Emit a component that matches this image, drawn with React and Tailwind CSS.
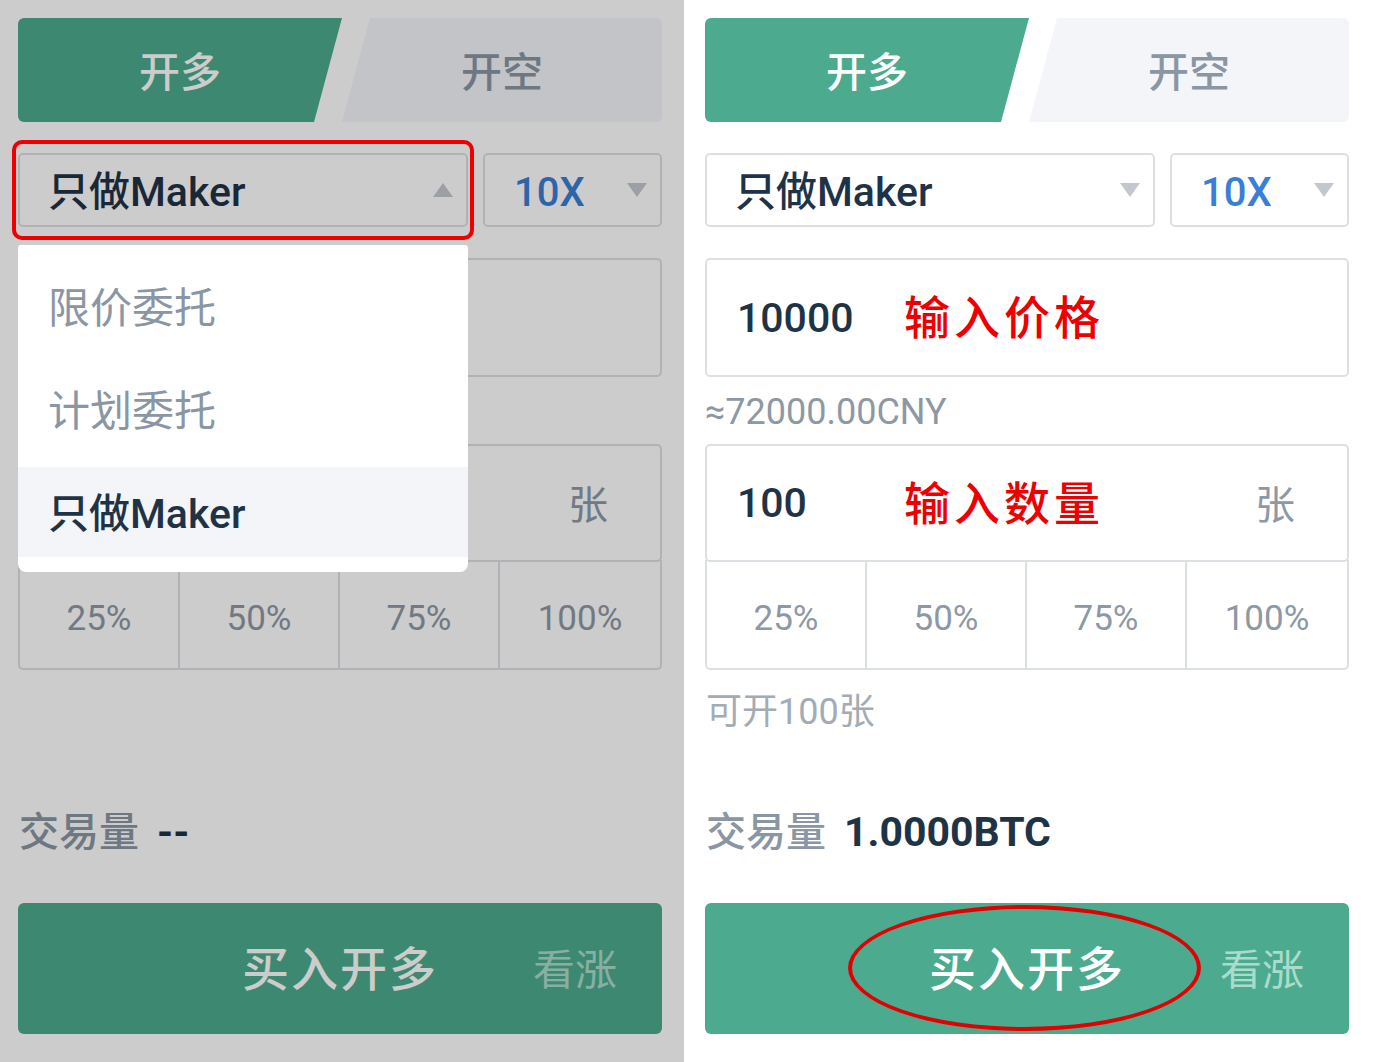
import React from "react";

const FONT = "font-['Roboto','Noto_Sans_CJK_SC',sans-serif]";

function DownArrow() {
  return <div className="w-0 h-0 border-x-[10px] border-x-transparent border-t-[14px] border-t-[#c3c8cf]" />;
}
function UpArrow() {
  return <div className="w-0 h-0 border-x-[10px] border-x-transparent border-b-[14px] border-b-[#c3c8cf]" />;
}

function Tabs() {
  return (
    <div className="flex h-[104px]">
      <div className="w-[324px] h-full bg-[#4caa8e] rounded-l-[6px] [clip-path:polygon(0_0,100%_0,calc(100%-28px)_100%,0_100%)] flex items-center justify-center pt-[7px] text-white text-[41px] font-medium">
        开多
      </div>
      <div className="flex-1 h-full bg-[#f4f5f9] rounded-r-[6px] [clip-path:polygon(28px_0,100%_0,100%_100%,0_100%)] flex items-center justify-center pt-[7px] text-[#8a96a3] text-[41px] font-medium">
        开空
      </div>
    </div>
  );
}

function Panel({ left }) {
  return (
    <div className="flex flex-col">
      <Tabs />
      <div className="flex gap-[15px] mt-[31px] h-[74px]">
        <div className="relative w-[450px] h-full border-2 border-[#dcdfe3] rounded-[5px] flex items-center justify-between pl-[28px] pr-[13px]">
          <span className="pt-[5px] text-[41px] font-medium text-[#1f3347]">只做Maker</span>
          {left ? <UpArrow /> : <DownArrow />}
          {left && (
            <>
              <div className="absolute -left-[8px] -top-[15px] -right-[8px] -bottom-[15px] border-[4px] border-[#ee0000] rounded-[10px] z-20" />
              <div className="absolute -left-[2px] top-[90px] w-[450px] bg-white rounded-b-[8px] rounded-t-[3px] z-20 pt-[16px] pb-[15px] flex flex-col gap-[13px]">
                <div className="h-[90px] flex items-center pl-[30px] pt-[4px] text-[42px] text-[#8a96a3]">限价委托</div>
                <div className="h-[90px] flex items-center pl-[30px] pt-[4px] text-[42px] text-[#8a96a3]">计划委托</div>
                <div className="h-[90px] flex items-center pl-[30px] pt-[6px] text-[41px] font-medium text-[#1f3347] bg-[#f4f5f9]">只做Maker</div>
              </div>
            </>
          )}
        </div>
        <div className="flex-1 h-full border-2 border-[#dcdfe3] rounded-[5px] flex items-center justify-between pl-[29px] pr-[13px]">
          <span className="pt-[5px] text-[40px] font-medium text-[#3a7fd5]">10X</span>
          <DownArrow />
        </div>
      </div>
      <div className="mt-[31px] h-[119px] border-2 border-[#dcdfe3] rounded-[5px] flex items-center pl-[30px]">
        {!left && (
          <>
            <span className="w-[167px] pt-[2px] text-[41px] font-medium text-[#1f3347]">10000</span>
            <span className="pt-[2px] text-[46px] font-medium text-[#ee0000] tracking-[4px]">输入价格</span>
          </>
        )}
      </div>
      <div className="h-[67px] flex items-center pt-[3px] text-[36px] text-[#8d98a5]">
        {!left && "≈72000.00CNY"}
      </div>
      <div className="h-[118px] border-2 border-[#dcdfe3] rounded-[5px] flex items-center pl-[30px] pr-[52px]">
        {!left && (
          <>
            <span className="w-[167px] pt-[2px] text-[41px] font-medium text-[#1f3347]">100</span>
            <span className="pt-[2px] text-[46px] font-medium text-[#ee0000] tracking-[4px]">输入数量</span>
          </>
        )}
        <span className="ml-auto pt-[5px] text-[40px] text-[#8d98a5]">张</span>
      </div>
      <div className="h-[110px] grid grid-cols-4 border-2 border-t-0 border-[#dcdfe3] rounded-b-[5px] -mt-[2px]">
        {["25%", "50%", "75%", "100%"].map((p, i) => (
          <div
            key={p}
            className={`flex items-center justify-center pt-[10px] text-[35px] text-[#8d98a5] ${i < 3 ? "border-r-2 border-[#dcdfe3]" : ""}`}
          >
            {p}
          </div>
        ))}
      </div>
      <div className="h-[82px] flex items-center pl-[1px] pt-[2px] text-[36px] text-[#a3abb4]">
        {!left && "可开100张"}
      </div>
      <div className="mt-[48px] h-[60px] flex items-center gap-[18px] pl-[1px] pt-[5px]">
        <span className="text-[40px] font-medium text-[#8a96a3]">交易量</span>
        <span className="text-[41px] font-bold text-[#1f3347]">{left ? "--" : "1.0000BTC"}</span>
      </div>
      <div className="relative mt-[43px] h-[131px] bg-[#4caa8e] rounded-[6px] grid grid-cols-[1fr_auto_1fr] items-center pt-[4px]">
        {!left && (
          <div className="absolute left-[143px] top-[2px] w-[353px] h-[126px] border-[4px] border-[#e30000] rounded-[50%]" />
        )}
        <div />
        <span className="relative text-[47px] font-medium text-white tracking-[2px]">买入开多</span>
        <div className="flex justify-end pr-[45px] text-[42px] text-[#a9dccb]">看涨</div>
      </div>
    </div>
  );
}

export default function App() {
  return (
    <div className={`w-[1376px] h-[1062px] flex bg-white overflow-hidden ${FONT}`}>
      <div className="relative isolate w-[684px] h-full bg-white pl-[18px] pr-[22px] pt-[18px]">
        <Panel left />
        <div className="absolute inset-0 bg-black/20 z-10" />
      </div>
      <div className="w-[692px] h-full bg-white pl-[21px] pr-[27px] pt-[18px]">
        <Panel />
      </div>
    </div>
  );
}
